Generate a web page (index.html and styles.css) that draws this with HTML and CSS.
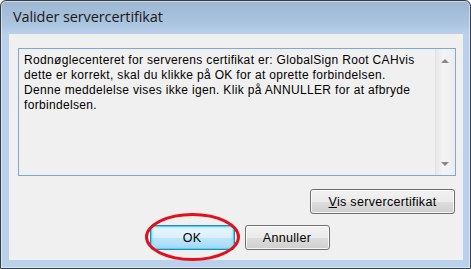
FILE: index.html
```html
<!DOCTYPE html>
<html lang="da">
<head>
<meta charset="utf-8">
<title>Valider servercertifikat</title>
<link rel="stylesheet" href="styles.css">
</head>
<body>
<div class="window">
  <div class="titlebar">Valider servercertifikat</div>
  <div class="client">
    <div class="textbox">
      <div class="message">Rodnøglecenteret for serverens certifikat er: GlobalSign Root CAHvis<br>dette er korrekt, skal du klikke på OK for at oprette forbindelsen.<br>Denne meddelelse vises ikke igen. Klik på ANNULLER for at afbryde<br>forbindelsen.</div>
      <div class="scrollbar">
        <span class="arrow up"></span>
        <span class="arrow down"></span>
      </div>
    </div>
    <div class="row row-right">
      <button class="btn btn-wide"><u>V</u>is servercertifikat</button>
    </div>
    <div class="row row-center">
      <div class="ok-wrap">
        <button class="btn btn-default">OK</button>
        <span class="ring"></span>
      </div>
      <button class="btn">Annuller</button>
    </div>
  </div>
</div>
</body>
</html>
```
FILE: styles.css
```css
* { box-sizing: border-box; }
html, body { margin: 0; padding: 0; background: #ffffff; }
body { width: 471px; height: 269px; overflow: hidden; }

.window {
  width: 471px;
  height: 269px;
  border: 1px solid #3a3f47;
  border-radius: 6px 6px 0 0;
  background: linear-gradient(to bottom, #9db6d1 0px, #a9c2dd 20px, #b9d1ea 34px, #b9d1ea 100%);
  box-shadow: inset 0 0 0 1px rgba(255,255,255,0.45);
  display: flex;
  flex-direction: column;
  padding: 0 7px 8px 8px;
  font-family: "Liberation Sans", Arial, sans-serif;
}

.titlebar {
  height: 33px;
  padding-left: 4px;
  padding-top: 6px;
  font-family: "Open Sans", "Liberation Sans", sans-serif;
  font-size: 14.5px;
  color: #1a1a1a;
  line-height: 20px;
  letter-spacing: -0.1px;
}

.client {
  flex: 1;
  background: #f0f0f0;
  padding: 14px 7px 0 9px;
  display: flex;
  flex-direction: column;
}

.textbox {
  height: 128px;
  border: 1px solid #7ea9d3;
  background: #f0f0f0;
  display: flex;
}

.message {
  flex: 1;
  padding: 4px 0 0 5px;
  font-size: 12px;
  line-height: 15px;
  letter-spacing: 0.33px;
  color: #000;
  white-space: nowrap;
}

.scrollbar {
  width: 20px;
  border-left: 1px solid #e2e2e2;
  background: linear-gradient(to right, #e8e8e8, #f4f4f4 40%, #ececec);
  position: relative;
}

.arrow {
  position: absolute;
  left: 5px;
  width: 0;
  height: 0;
  border-left: 4px solid transparent;
  border-right: 4px solid transparent;
}
.arrow.up { top: 10px; border-bottom: 4px solid #8a8a8a; }
.arrow.down { bottom: 9px; border-top: 4px solid #8a8a8a; }

.row { display: flex; }
.row-right { justify-content: flex-end; margin-top: 13px; padding-right: 1px; }
.row-center { justify-content: center; gap: 10px; margin-top: 11px; padding-left: 5px; }

.btn {
  height: 25px;
  width: 85px;
  border: 1px solid #707070;
  border-radius: 3px;
  background: linear-gradient(to bottom, #f2f2f2 0%, #ebebeb 50%, #dddddd 51%, #cfcfcf 100%);
  box-shadow: inset 0 0 0 1px rgba(255,255,255,0.8);
  font-family: "Liberation Sans", Arial, sans-serif;
  font-size: 12.5px;
  letter-spacing: 0.3px;
  color: #000;
  padding: 0;
}
.btn u { text-decoration: underline; text-underline-offset: 1px; }
.btn-wide { width: 145px; }

.btn-default {
  border-color: #3c7fb1;
  background: linear-gradient(to bottom, #eaf6fd 0%, #d9f0fc 50%, #bee6fd 51%, #a7d9f5 100%);
  box-shadow: inset 0 0 0 1px #48d7fb, inset 0 0 2px 2px rgba(120,220,250,0.5);
}

.ok-wrap { position: relative; }
.ring {
  position: absolute;
  left: -5px;
  right: -5px;
  top: -12px;
  bottom: -11px;
  border: 3px solid #e3101c;
  border-radius: 50%;
  pointer-events: none;
}
```
